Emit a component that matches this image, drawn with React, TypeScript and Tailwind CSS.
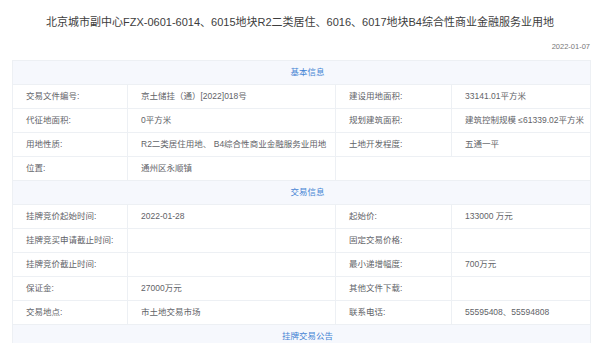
const rows1: string[][] = [
    ['交易文件编号:', '京土储挂（通）[2022]018号', '建设用地面积:', '33141.01平方米'],
    ['代征地面积:', '0平方米', '规划建筑面积:', '建筑控制规模 ≤61339.02平方米'],
    ['用地性质:', 'R2二类居住用地、 B4综合性商业金融服务业用地', '土地开发程度:', '五通一平'],
];

const rows2: string[][] = [
    ['挂牌竞价起始时间:', '2022-01-28', '起始价:', '133000 万元'],
    ['挂牌竞买申请截止时间:', '', '固定交易价格:', ''],
    ['挂牌竞价截止时间:', '', '最小递增幅度:', '700万元'],
    ['保证金:', '27000万元', '其他文件下载:', ''],
    ['交易地点:', '市土地交易市场', '联系电话:', '55595408、55594808'],
];

const cell = 'h-6 border border-[#edf0f4] px-[13px] align-middle whitespace-nowrap';

const SectionHead = ({ title }: { title: string }) => (
    <tr className="bg-[#f6f8fd]">
        <td colSpan={4} className="h-6 border border-[#edf0f4] pl-[12px] text-center text-[#4584d4]">
            {title}
        </td>
    </tr>
);

const Row = ({ r }: { r: string[] }) => (
    <tr>
        {r.map((c, i) => (
            <td key={i} className={cell}>
                {c}
            </td>
        ))}
    </tr>
);

export default function App() {
    return (
        <div
            className="h-[343px] w-[600px] overflow-hidden bg-white text-[#5f6368]"
            style={{ fontFamily: '"Liberation Sans", "Noto Sans CJK SC", sans-serif' }}
        >
            <div className="pt-[14px] text-center text-[11px] text-[#3d3d3d]">
                北京城市副中心FZX-0601-6014、6015地块R2二类居住、6016、6017地块B4综合性商业金融服务业用地
            </div>
            <div className="mt-[10px] pr-[10px] text-right text-[7.5px] text-[#777]">2022-01-07</div>
            <table className="ml-[12px] mt-[8px] w-[578px] table-fixed border-collapse text-[8.5px]">
                <colgroup>
                    <col className="w-[115px]" />
                    <col className="w-[208px]" />
                    <col className="w-[116px]" />
                    <col className="w-[139px]" />
                </colgroup>
                <tbody>
                    <SectionHead title="基本信息" />
                    {rows1.map((r, i) => (
                        <Row key={i} r={r} />
                    ))}
                    <tr>
                        <td className={cell}>位置:</td>
                        <td className={cell}>通州区永顺镇</td>
                        <td colSpan={2} className={cell}></td>
                    </tr>
                    <SectionHead title="交易信息" />
                    {rows2.map((r, i) => (
                        <Row key={i} r={r} />
                    ))}
                    <SectionHead title="挂牌交易公告" />
                </tbody>
            </table>
        </div>
    );
}
